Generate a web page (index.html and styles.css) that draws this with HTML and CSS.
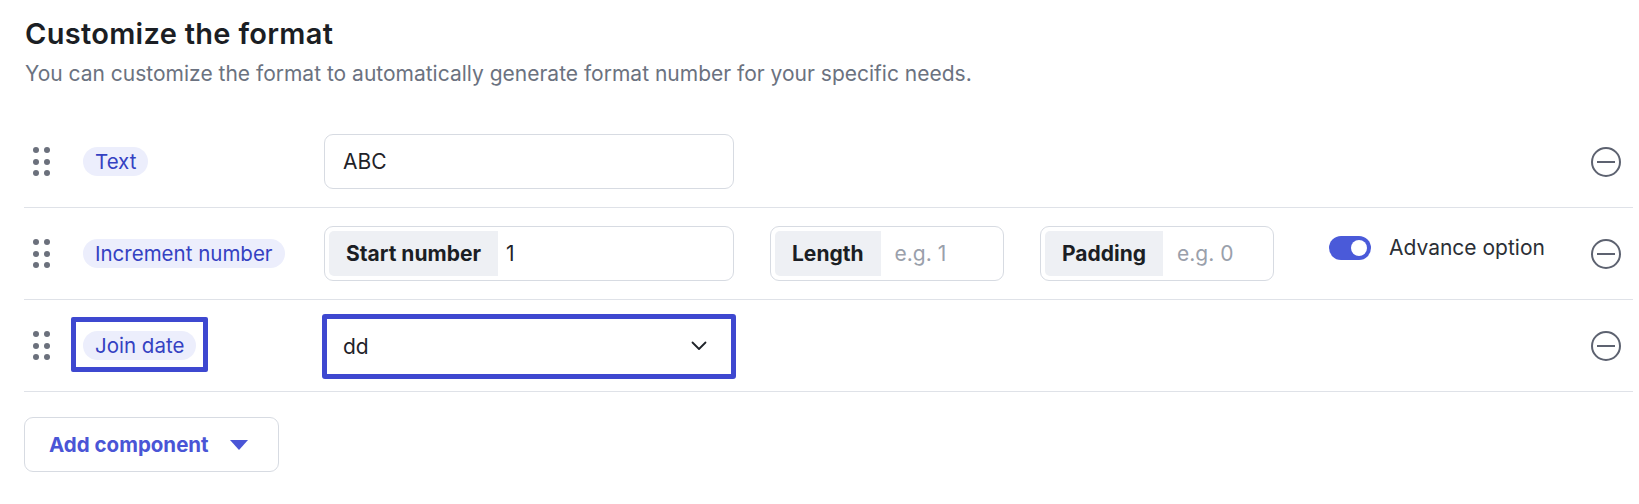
FILE: index.html
```html
<!DOCTYPE html>
<html>
<head>
<meta charset="utf-8">
<link rel="stylesheet" href="styles.css">
</head>
<body>
<div class="page">
  <h1 class="title">Customize the format</h1>
  <p class="subtitle">You can customize the format to automatically generate format number for your specific needs.</p>

  <div class="rows">
    <div class="row">
      <span class="handle"><i></i><i></i><i></i><i></i><i></i><i></i></span>
      <div class="label-col"><span class="chip">Text</span></div>
      <div class="content">
        <div class="field field-wide"><span class="value">ABC</span></div>
      </div>
      <span class="remove"><svg width="30" height="30" viewBox="0 0 30 30"><circle cx="15" cy="15" r="14" fill="none" stroke="#5d6270" stroke-width="2"/><line x1="6" y1="15" x2="24" y2="15" stroke="#5d6270" stroke-width="2"/></svg></span>
    </div>

    <div class="row">
      <span class="handle"><i></i><i></i><i></i><i></i><i></i><i></i></span>
      <div class="label-col"><span class="chip">Increment number</span></div>
      <div class="content">
        <div class="field field-wide"><span class="addon">Start number</span><span class="value">1</span></div>
        <div class="field field-small"><span class="addon">Length</span><span class="placeholder">e.g. 1</span></div>
        <div class="field field-small"><span class="addon">Padding</span><span class="placeholder">e.g. 0</span></div>
        <div class="advance">
          <span class="toggle"><span class="knob"></span></span>
          <span class="advance-text">Advance option</span>
        </div>
      </div>
      <span class="remove"><svg width="30" height="30" viewBox="0 0 30 30"><circle cx="15" cy="15" r="14" fill="none" stroke="#5d6270" stroke-width="2"/><line x1="6" y1="15" x2="24" y2="15" stroke="#5d6270" stroke-width="2"/></svg></span>
    </div>

    <div class="row">
      <span class="handle"><i></i><i></i><i></i><i></i><i></i><i></i></span>
      <div class="label-col"><span class="chip chip-marked">Join date</span></div>
      <div class="content">
        <div class="select"><span class="value">dd</span>
          <svg class="chevron" width="16" height="10" viewBox="0 0 16 10"><path d="M1.5 1.5 L8 8 L14.5 1.5" fill="none" stroke="#1f2329" stroke-width="1.8" stroke-linecap="round" stroke-linejoin="round"/></svg>
        </div>
      </div>
      <span class="remove"><svg width="30" height="30" viewBox="0 0 30 30"><circle cx="15" cy="15" r="14" fill="none" stroke="#5d6270" stroke-width="2"/><line x1="6" y1="15" x2="24" y2="15" stroke="#5d6270" stroke-width="2"/></svg></span>
    </div>
  </div>

  <button class="add-btn">Add component <svg class="caret" width="18" height="10" viewBox="0 0 18 10"><path d="M0 0 H18 L9 10 Z" fill="#4a55d6"/></svg></button>
</div>
</body>
</html>
```

FILE: styles.css
```css
* { box-sizing: border-box; }
html, body { margin: 0; padding: 0; background: #ffffff; }
body {
  font-family: Inter, "Noto Sans", "Liberation Sans", sans-serif;
  color: #1f2329;
  width: 1639px;
  height: 504px;
  overflow: hidden;
}
.page { padding-left: 24px; width: 1633px; }
.title {
  margin: 16px 0 0 1px;
  font-size: 29px;
  line-height: 35px;
  font-weight: 600;
  letter-spacing: 0.3px;
  color: #1b1e24;
}
.subtitle {
  margin: 9px 0 0 1px;
  font-size: 21px;
  line-height: 28px;
  color: #6b7280;
}
.rows { margin-top: 28px; }
.row {
  display: flex;
  align-items: center;
  height: 92px;
  border-bottom: 1px solid #dfe2e8;
  padding-left: 9px;
  padding-right: 12px;
}
.handle {
  display: grid;
  grid-template-columns: 6px 6px;
  column-gap: 5px;
  row-gap: 5.5px;
  width: 17px;
  flex: none;
}
.handle i {
  display: block;
  width: 6px;
  height: 6px;
  border-radius: 50%;
  background: #6b707c;
}
.label-col { width: 274px; padding-left: 33px; flex: none; }
.chip {
  display: inline-block;
  position: relative;
  height: 29px;
  line-height: 29px;
  padding: 0 12px;
  border-radius: 15px;
  background: #eceefc;
  color: #3441c2;
  font-size: 20.5px;
}
.chip-marked::after {
  content: "";
  position: absolute;
  left: -12px; right: -12px; top: -14px; bottom: -12px;
  border: 5px solid #3e48d0;
  border-radius: 2px;
}
.content { flex: 1; display: flex; align-items: center; gap: 36px; }
.field {
  height: 55px;
  border: 1px solid #d7dbe2;
  border-radius: 9px;
  display: flex;
  align-items: center;
  padding: 4px;
  font-size: 21px;
}
.field-wide { width: 410px; }
.field-small { width: 234px; }
.field .value { padding-left: 14px; color: #1f2329; }
.addon + .value { padding-left: 8px; }
.addon {
  height: 45px;
  display: flex;
  align-items: center;
  padding: 0 17px;
  background: #eef0f4;
  border-radius: 5px 0 0 5px;
  font-weight: 700;
  color: #1b1e24;
}
.placeholder { padding-left: 14px; color: #9aa0ab; }
.advance {
  display: flex;
  align-items: center;
  gap: 18px;
  margin-left: 19px;
  margin-bottom: 12px;
}
.toggle {
  width: 42px;
  height: 24px;
  border-radius: 12px;
  background: #4a5ad9;
  position: relative;
}
.knob {
  position: absolute;
  right: 4px;
  top: 4px;
  width: 16px;
  height: 16px;
  border-radius: 50%;
  background: #ffffff;
}
.advance-text { font-size: 21px; color: #2b2f36; }
.remove { width: 30px; height: 30px; flex: none; margin-left: auto; display: block; }
.remove svg { display: block; }
.select {
  width: 414px;
  height: 65px;
  margin-left: -2px;
  margin-top: 1px;
  border: 5px solid #3e48d0;
  border-radius: 3px;
  display: flex;
  align-items: center;
  justify-content: space-between;
  padding: 0 24px 0 16px;
  font-size: 21px;
}
.chevron { display: block; }
.add-btn {
  margin-top: 25px;
  width: 255px;
  height: 55px;
  border: 1px solid #d7dbe2;
  border-radius: 9px;
  background: #ffffff;
  font-family: inherit;
  font-size: 20.5px;
  font-weight: 700;
  color: #4a55d6;
  display: flex;
  align-items: center;
  padding: 0 0 0 24px;
  gap: 21px;
}
.caret { display: block; }
```
